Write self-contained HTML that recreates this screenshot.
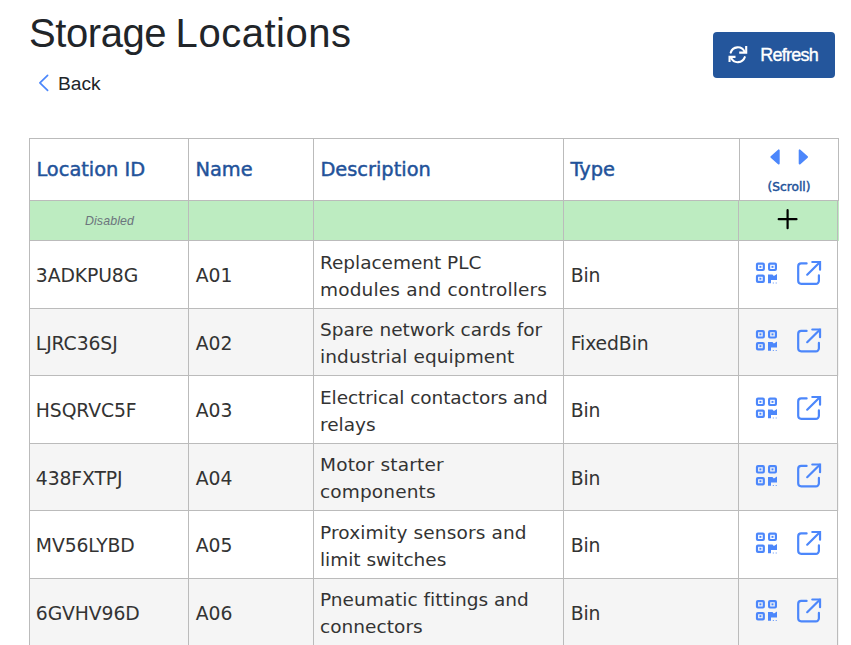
<!DOCTYPE html>
<html lang="en">
<head>
<meta charset="utf-8">
<title>Storage Locations</title>
<style>
*{box-sizing:border-box;margin:0;padding:0}
html,body{width:851px;height:645px;overflow:hidden;background:#fff}
body{font-family:"Liberation Sans",sans-serif;color:#212529;position:relative}
h1{position:absolute;left:29px;top:9px;font-size:40px;font-weight:400;line-height:48px;color:#212529;white-space:nowrap;word-spacing:-1.600px}
.back{position:absolute;left:39px;top:71px;height:26px;font-size:19.2px;line-height:26px;color:#212529;white-space:nowrap}
.back svg{position:absolute;left:-.7px;top:3.2px}
.back span{position:absolute;left:19px;top:0}
.btn{position:absolute;left:713px;top:32px;width:122px;height:46px;border-radius:4px;background:#24569c;color:#fff;font-size:18px;letter-spacing:-.78px;-webkit-text-stroke:.35px #fff;line-height:46px;white-space:nowrap}
.btn svg{position:absolute;left:0;top:0}
.btn span{position:absolute;left:47.3px;top:0}
.tbl{position:absolute;left:0;top:0;width:851px;height:645px;font-family:"DejaVu Sans","Liberation Sans",sans-serif}
.row{position:absolute;left:29px;width:810px}
.c{position:absolute;top:0;height:100%;border:1px solid #bbb;padding:0 0 0 7px;display:flex;align-items:center;white-space:nowrap;overflow:hidden}
.c1{left:0;width:160px}.c2{left:159px;width:126px}.c3{left:284px;width:251px}.c4{left:534px;width:176px}.c5{left:709px;width:100px;padding:0}
.hd{top:138px;height:63px;z-index:2}
.hd .c{font-family:"DejaVu Sans","Liberation Sans",sans-serif;font-size:19.4px;font-weight:400;-webkit-text-stroke:.45px #22529a;color:#22529a;background:#fff;padding-bottom:1px;padding-left:6.4px}
.hd .c4{width:177px}.hd .c5{left:710px}
.hd .c5 svg{position:absolute;left:0;top:0}
.hd .c5 span{position:absolute;left:0;width:98px;top:40.500px;text-align:center;font-size:12.2px;line-height:14px}
.new{top:200px;height:41px;background:#bdecc1}
.new .c1{justify-content:center;padding:0;font-family:"Liberation Sans",sans-serif;font-size:12.4px;letter-spacing:.12px;font-style:italic;color:#6c757d;padding-left:1px}
.new .c5 svg{position:absolute;left:0;top:0}
.dr .c{font-size:18.8px;letter-spacing:-.1px;line-height:27px;color:#333;padding-left:5.8px;padding-top:1.5px}
.dr .c2{padding-left:6.8px}.dr .c4{padding-left:6.7px}
.dr .c3{font-size:18.5px;letter-spacing:0}
.dr.alt{background:#f5f5f5}
.dr.sh .c{padding-top:3.5px}
.dr .c3{display:block}
.dr .c3 div{position:absolute;left:6px}
.dr .c5 svg{position:absolute;top:0;left:0}

</style>
</head>
<body>
<h1><span style="letter-spacing:-.43px">Storage</span> <span style="letter-spacing:.52px">Locations</span></h1>
<div class="back"><svg width="12" height="18" viewBox="0 0 12 18"><path d="M9.6 1.300 L1.900 8.800 L9.600 16.300" fill="none" stroke="#4c87fb" stroke-width="1.700" stroke-linecap="round" stroke-linejoin="round"/></svg><span>Back</span></div>
<div class="btn"><svg width="46" height="46" viewBox="0 0 46 46" fill="none" stroke="#fff" stroke-width="2.1"><path d="M17.700 20.600 A7.400 7.400 0 0 1 31.500 19.600 M31.800 25.200 A7.400 7.400 0 0 1 18.100 25.900" stroke-linecap="round"/><path d="M33.200 14 V20.650 H26.200 M16.550 29.900 V24.850 H22.500"/></svg><span>Refresh</span></div>
<div class="tbl">
<div class="row hd"><div class="c c1">Location ID</div><div class="c c2">Name</div><div class="c c3">Description</div><div class="c c4">Type</div><div class="c c5"><svg width="98" height="61" viewBox="0 0 98 61"><path d="M31.400 18 L38.700 11.400 L38.700 24.600 Z M67 18 L59.700 11.400 L59.700 24.600 Z" fill="#4c87fb" stroke="#4c87fb" stroke-width="2" stroke-linejoin="round"/></svg><span>(Scroll)</span></div></div>
<div class="row new"><div class="c c1">Disabled</div><div class="c c2"></div><div class="c c3"></div><div class="c c4"></div><div class="c c5"><svg width="98" height="39" viewBox="0 0 98 39"><path d="M39.700 18.200 H57.500 M48.600 9.200 V27.200" stroke="#000" stroke-width="2.200" stroke-linecap="round" fill="none"/></svg></div></div>
<div class="row dr" style="top:240px;height:69px"><div class="c c1">3ADKPU8G</div><div class="c c2">A01</div><div class="c c3"><div style="top:7.6px;letter-spacing:-0.03px">Replacement PLC</div><div style="top:34.7px;letter-spacing:0.16px">modules and controllers</div></div><div class="c c4">Bin</div><div class="c c5"><svg width="98" height="67" viewBox="0 0 98 67" fill="none" stroke="#4c87fb" stroke-linecap="round" stroke-linejoin="round"><g transform="translate(0 -0.5)" stroke-width="2.200"><rect x="18" y="23.2" width="6.8" height="6.300" rx=".9"/><rect x="20.4" y="25.35" width="2" height="2" fill="#4c87fb" stroke="none"/><rect x="30.1" y="23.2" width="6.8" height="6.300" rx=".9"/><rect x="32.5" y="25.35" width="2" height="2" fill="#4c87fb" stroke="none"/><rect x="18" y="35.05" width="6.8" height="6.300" rx=".9"/><rect x="20.4" y="37.2" width="2" height="2" fill="#4c87fb" stroke="none"/><path d="M29 33.950 h4.400 l1.500 1.500 l3.100 -1.900 v5.900 h-6 v3.200 h-3 z" fill="#4c87fb" stroke="none"/><path d="M33.800 41.900 h1 v1 h-1 z M36.700 41.900 h1 v1 h-1 z" fill="#4c87fb" stroke="none" opacity=".9"/><path d="M67.600 22.900 H62.200 a3 3 0 0 0 -3 3 V40.300 a3 3 0 0 0 3 3 H76.900 a3 3 0 0 0 3 -3 V34.900" stroke-width="2.200"/><path d="M68.200 34.200 L80.800 21.700" stroke-width="2.200"/><path d="M73.300 21.500 H81.040 V29.200" stroke-width="2.200" stroke-linejoin="miter"/></g></svg></div></div>
<div class="row dr alt sh" style="top:308px;height:68px"><div class="c c1">LJRC36SJ</div><div class="c c2">A02</div><div class="c c3"><div style="top:7.1px;letter-spacing:0.02px">Spare network cards for</div><div style="top:34.2px;letter-spacing:0.1px">industrial equipment</div></div><div class="c c4">FixedBin</div><div class="c c5"><svg width="98" height="66" viewBox="0 0 98 66" fill="none" stroke="#4c87fb" stroke-linecap="round" stroke-linejoin="round"><g transform="translate(0 -1)" stroke-width="2.200"><rect x="18" y="23.2" width="6.8" height="6.300" rx=".9"/><rect x="20.4" y="25.35" width="2" height="2" fill="#4c87fb" stroke="none"/><rect x="30.1" y="23.2" width="6.8" height="6.300" rx=".9"/><rect x="32.5" y="25.35" width="2" height="2" fill="#4c87fb" stroke="none"/><rect x="18" y="35.05" width="6.8" height="6.300" rx=".9"/><rect x="20.4" y="37.2" width="2" height="2" fill="#4c87fb" stroke="none"/><path d="M29 33.950 h4.400 l1.500 1.500 l3.100 -1.900 v5.900 h-6 v3.200 h-3 z" fill="#4c87fb" stroke="none"/><path d="M33.800 41.900 h1 v1 h-1 z M36.700 41.900 h1 v1 h-1 z" fill="#4c87fb" stroke="none" opacity=".9"/><path d="M67.600 22.900 H62.200 a3 3 0 0 0 -3 3 V40.300 a3 3 0 0 0 3 3 H76.900 a3 3 0 0 0 3 -3 V34.900" stroke-width="2.200"/><path d="M68.200 34.200 L80.800 21.700" stroke-width="2.200"/><path d="M73.300 21.500 H81.040 V29.200" stroke-width="2.200" stroke-linejoin="miter"/></g></svg></div></div>
<div class="row dr" style="top:375px;height:69px"><div class="c c1">HSQRVC5F</div><div class="c c2">A03</div><div class="c c3"><div style="top:7.6px;letter-spacing:-0.07px">Electrical contactors and</div><div style="top:34.7px;letter-spacing:0px">relays</div></div><div class="c c4">Bin</div><div class="c c5"><svg width="98" height="67" viewBox="0 0 98 67" fill="none" stroke="#4c87fb" stroke-linecap="round" stroke-linejoin="round"><g transform="translate(0 -0.5)" stroke-width="2.200"><rect x="18" y="23.2" width="6.8" height="6.300" rx=".9"/><rect x="20.4" y="25.35" width="2" height="2" fill="#4c87fb" stroke="none"/><rect x="30.1" y="23.2" width="6.8" height="6.300" rx=".9"/><rect x="32.5" y="25.35" width="2" height="2" fill="#4c87fb" stroke="none"/><rect x="18" y="35.05" width="6.8" height="6.300" rx=".9"/><rect x="20.4" y="37.2" width="2" height="2" fill="#4c87fb" stroke="none"/><path d="M29 33.950 h4.400 l1.500 1.500 l3.100 -1.900 v5.900 h-6 v3.200 h-3 z" fill="#4c87fb" stroke="none"/><path d="M33.800 41.900 h1 v1 h-1 z M36.700 41.900 h1 v1 h-1 z" fill="#4c87fb" stroke="none" opacity=".9"/><path d="M67.600 22.900 H62.200 a3 3 0 0 0 -3 3 V40.300 a3 3 0 0 0 3 3 H76.900 a3 3 0 0 0 3 -3 V34.900" stroke-width="2.200"/><path d="M68.200 34.200 L80.800 21.700" stroke-width="2.200"/><path d="M73.300 21.500 H81.040 V29.200" stroke-width="2.200" stroke-linejoin="miter"/></g></svg></div></div>
<div class="row dr alt sh" style="top:443px;height:68px"><div class="c c1">438FXTPJ</div><div class="c c2">A04</div><div class="c c3"><div style="top:7.1px;letter-spacing:0.18px">Motor starter</div><div style="top:34.2px;letter-spacing:0.14px">components</div></div><div class="c c4">Bin</div><div class="c c5"><svg width="98" height="66" viewBox="0 0 98 66" fill="none" stroke="#4c87fb" stroke-linecap="round" stroke-linejoin="round"><g transform="translate(0 -1)" stroke-width="2.200"><rect x="18" y="23.2" width="6.8" height="6.300" rx=".9"/><rect x="20.4" y="25.35" width="2" height="2" fill="#4c87fb" stroke="none"/><rect x="30.1" y="23.2" width="6.8" height="6.300" rx=".9"/><rect x="32.5" y="25.35" width="2" height="2" fill="#4c87fb" stroke="none"/><rect x="18" y="35.05" width="6.8" height="6.300" rx=".9"/><rect x="20.4" y="37.2" width="2" height="2" fill="#4c87fb" stroke="none"/><path d="M29 33.950 h4.400 l1.500 1.500 l3.100 -1.900 v5.900 h-6 v3.200 h-3 z" fill="#4c87fb" stroke="none"/><path d="M33.800 41.900 h1 v1 h-1 z M36.700 41.900 h1 v1 h-1 z" fill="#4c87fb" stroke="none" opacity=".9"/><path d="M67.600 22.900 H62.200 a3 3 0 0 0 -3 3 V40.300 a3 3 0 0 0 3 3 H76.900 a3 3 0 0 0 3 -3 V34.900" stroke-width="2.200"/><path d="M68.200 34.200 L80.800 21.700" stroke-width="2.200"/><path d="M73.300 21.500 H81.040 V29.200" stroke-width="2.200" stroke-linejoin="miter"/></g></svg></div></div>
<div class="row dr" style="top:510px;height:69px"><div class="c c1">MV56LYBD</div><div class="c c2">A05</div><div class="c c3"><div style="top:7.6px;letter-spacing:0.14px">Proximity sensors and</div><div style="top:34.7px;letter-spacing:-0.03px">limit switches</div></div><div class="c c4">Bin</div><div class="c c5"><svg width="98" height="67" viewBox="0 0 98 67" fill="none" stroke="#4c87fb" stroke-linecap="round" stroke-linejoin="round"><g transform="translate(0 -0.5)" stroke-width="2.200"><rect x="18" y="23.2" width="6.8" height="6.300" rx=".9"/><rect x="20.4" y="25.35" width="2" height="2" fill="#4c87fb" stroke="none"/><rect x="30.1" y="23.2" width="6.8" height="6.300" rx=".9"/><rect x="32.5" y="25.35" width="2" height="2" fill="#4c87fb" stroke="none"/><rect x="18" y="35.05" width="6.8" height="6.300" rx=".9"/><rect x="20.4" y="37.2" width="2" height="2" fill="#4c87fb" stroke="none"/><path d="M29 33.950 h4.400 l1.500 1.500 l3.100 -1.900 v5.900 h-6 v3.200 h-3 z" fill="#4c87fb" stroke="none"/><path d="M33.800 41.900 h1 v1 h-1 z M36.700 41.900 h1 v1 h-1 z" fill="#4c87fb" stroke="none" opacity=".9"/><path d="M67.600 22.900 H62.200 a3 3 0 0 0 -3 3 V40.300 a3 3 0 0 0 3 3 H76.900 a3 3 0 0 0 3 -3 V34.900" stroke-width="2.200"/><path d="M68.200 34.200 L80.800 21.700" stroke-width="2.200"/><path d="M73.300 21.500 H81.040 V29.200" stroke-width="2.200" stroke-linejoin="miter"/></g></svg></div></div>
<div class="row dr alt" style="top:578px;height:69px"><div class="c c1">6GVHV96D</div><div class="c c2">A06</div><div class="c c3"><div style="top:7.1px;letter-spacing:0.01px">Pneumatic fittings and</div><div style="top:34.2px;letter-spacing:0.04px">connectors</div></div><div class="c c4">Bin</div><div class="c c5"><svg width="98" height="67" viewBox="0 0 98 67" fill="none" stroke="#4c87fb" stroke-linecap="round" stroke-linejoin="round"><g transform="translate(0 -1)" stroke-width="2.200"><rect x="18" y="23.2" width="6.8" height="6.300" rx=".9"/><rect x="20.4" y="25.35" width="2" height="2" fill="#4c87fb" stroke="none"/><rect x="30.1" y="23.2" width="6.8" height="6.300" rx=".9"/><rect x="32.5" y="25.35" width="2" height="2" fill="#4c87fb" stroke="none"/><rect x="18" y="35.05" width="6.8" height="6.300" rx=".9"/><rect x="20.4" y="37.2" width="2" height="2" fill="#4c87fb" stroke="none"/><path d="M29 33.950 h4.400 l1.500 1.500 l3.100 -1.900 v5.900 h-6 v3.200 h-3 z" fill="#4c87fb" stroke="none"/><path d="M33.800 41.900 h1 v1 h-1 z M36.700 41.900 h1 v1 h-1 z" fill="#4c87fb" stroke="none" opacity=".9"/><path d="M67.600 22.900 H62.200 a3 3 0 0 0 -3 3 V40.300 a3 3 0 0 0 3 3 H76.900 a3 3 0 0 0 3 -3 V34.900" stroke-width="2.200"/><path d="M68.200 34.200 L80.800 21.700" stroke-width="2.200"/><path d="M73.300 21.500 H81.040 V29.200" stroke-width="2.200" stroke-linejoin="miter"/></g></svg></div></div>
</div>
</body>
</html>
